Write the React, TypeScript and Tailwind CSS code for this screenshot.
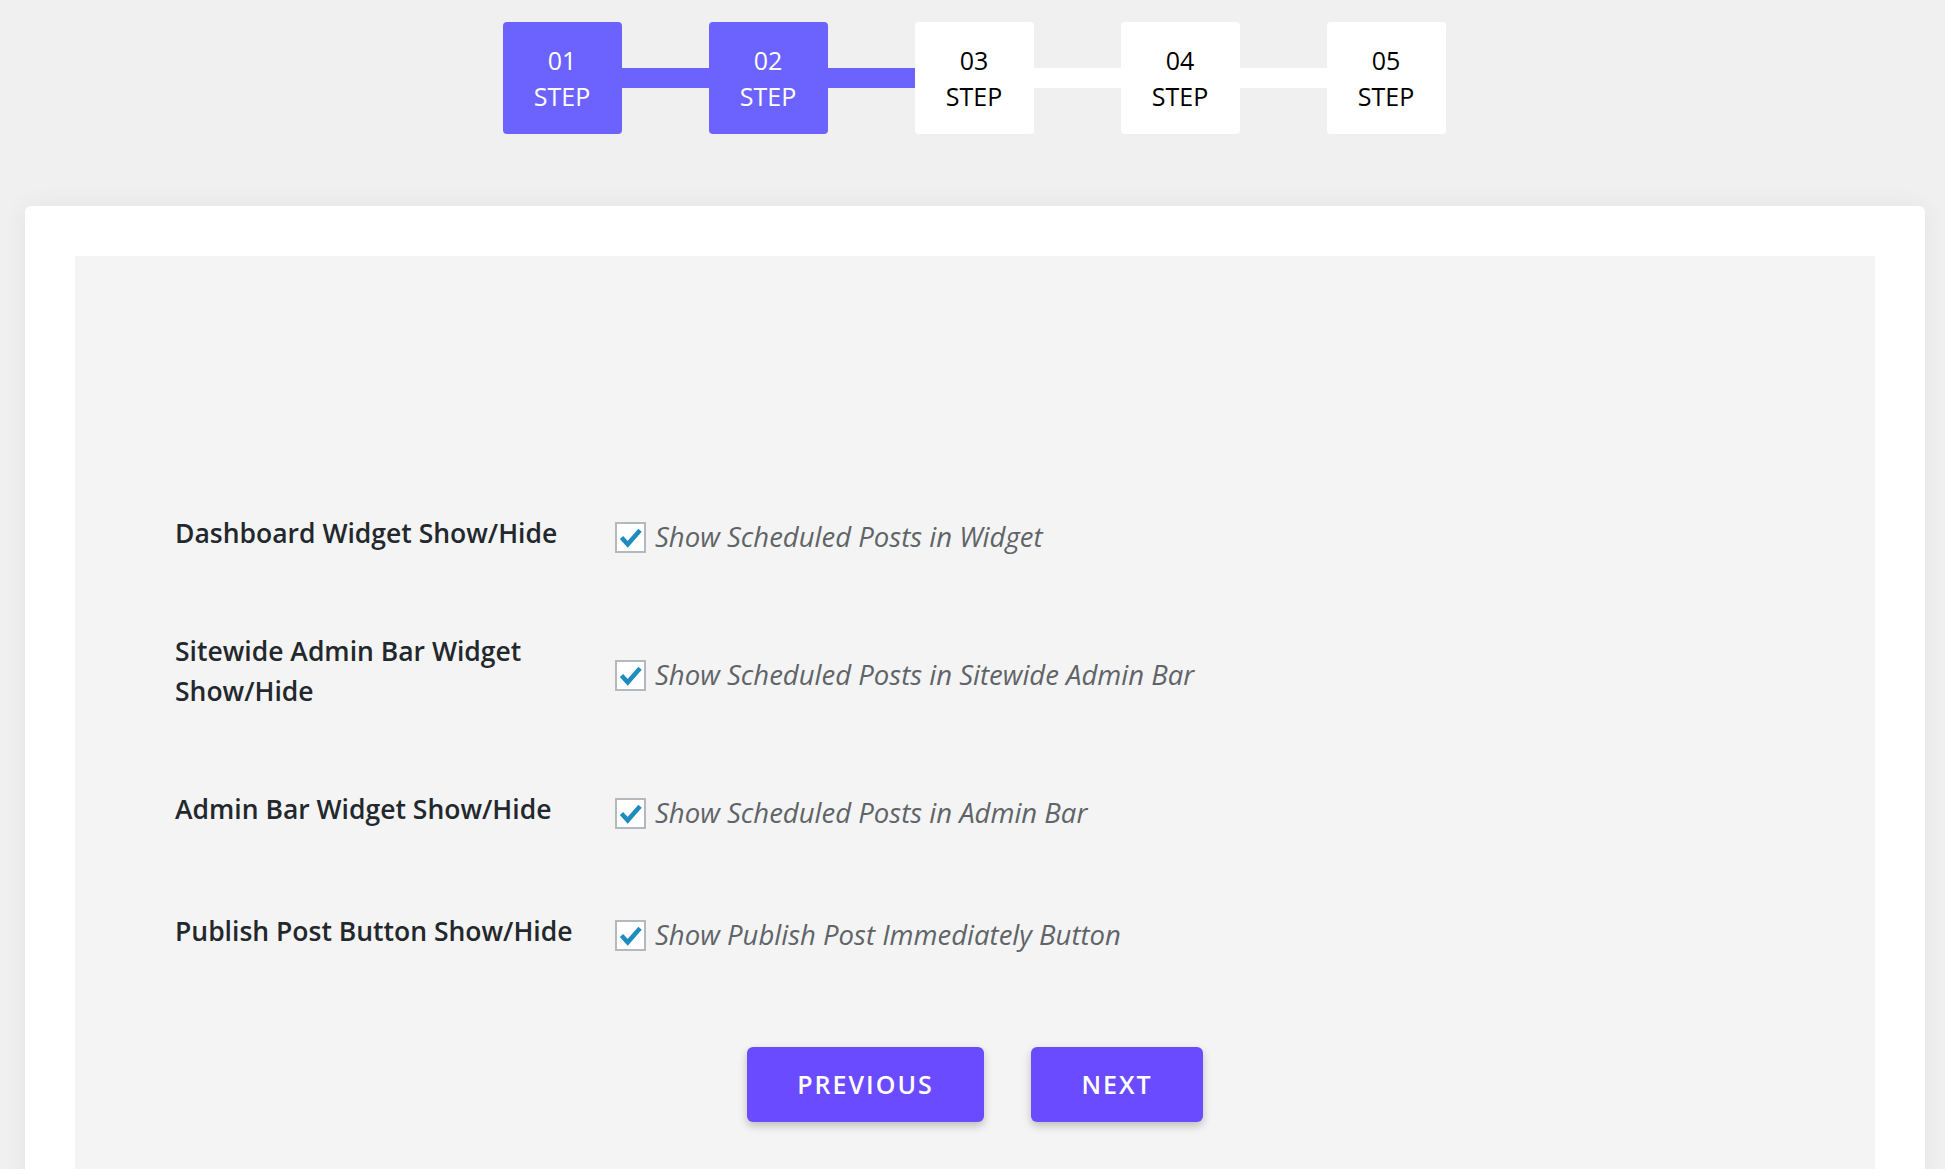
import React from 'react';

type Step = { num: string; done: boolean };

const steps: Step[] = [
  { num: '01', done: true },
  { num: '02', done: true },
  { num: '03', done: false },
  { num: '04', done: false },
  { num: '05', done: false },
];

const options = [
  { label: 'Dashboard Widget Show/Hide', text: 'Show Scheduled Posts in Widget' },
  { label: 'Sitewide Admin Bar Widget Show/Hide', text: 'Show Scheduled Posts in Sitewide Admin Bar' },
  { label: 'Admin Bar Widget Show/Hide', text: 'Show Scheduled Posts in Admin Bar' },
  { label: 'Publish Post Button Show/Hide', text: 'Show Publish Post Immediately Button' },
];

function CheckBox() {
  return (
    <span className="flex h-[31px] w-[31px] shrink-0 items-center justify-center border-2 border-[#b4b9be] bg-white">
      <svg viewBox="0 0 24 24" className="h-[28px] w-[28px]">
        <path d="M4 12.5 L9.5 18.5 L20.5 6" fill="none" stroke="#1e8cbe" strokeWidth={4} strokeLinejoin="miter" />
      </svg>
    </span>
  );
}

export default function App() {
  return (
    <div className="min-h-screen bg-[#f0f0f0] pt-[22px] font-['Open_Sans',sans-serif]">
      {/* stepper */}
      <div className="ml-[3px] flex items-center justify-center">
        {steps.map((s, i) => (
          <React.Fragment key={s.num}>
            {i > 0 && <div className={`h-[20px] w-[87px] ${i <= 2 ? 'bg-[#6c63ff]' : 'bg-white'}`} />}
            <div
              className={`flex h-[112px] w-[119px] flex-col items-center justify-center rounded-[4px] text-[25px] leading-[36px] ${
                s.done ? 'bg-[#6c63ff] text-white' : 'bg-white text-black'
              }`}
            >
              <span>{s.num}</span>
              <span>STEP</span>
            </div>
          </React.Fragment>
        ))}
      </div>

      {/* card */}
      <div className="ml-[25px] mt-[72px] w-[1900px] rounded-md bg-white px-[50px] pt-[50px] shadow-[0_0_24px_rgba(0,0,0,0.06)]">
        <div className="bg-[#f4f4f4] pb-[60px] pl-[100px] pt-[216px]">
          {options.map((o) => (
            <div key={o.label} className="flex items-center py-[37px]">
              <div className="w-[440px] pr-[20px] text-[26.5px] font-semibold leading-[40px] text-[#23282d]">{o.label}</div>
              <label className="mt-2 flex items-center gap-[9px]">
                <CheckBox />
                <span className="text-[27.5px] italic leading-[40px] text-[#5f6468]">{o.text}</span>
              </label>
            </div>
          ))}

          <div className="-ml-[100px] mt-[55px] flex justify-center gap-[47px]">
            <button className="h-[75px] w-[237px] rounded-md bg-[#6a4bff] text-[25px] font-semibold tracking-[2px] text-white shadow-[0_4px_8px_rgba(0,0,0,0.22)]">
              PREVIOUS
            </button>
            <button className="h-[75px] w-[172px] rounded-md bg-[#6a4bff] text-[25px] font-semibold tracking-[2px] text-white shadow-[0_4px_8px_rgba(0,0,0,0.22)]">
              NEXT
            </button>
          </div>
        </div>
      </div>
    </div>
  );
}
